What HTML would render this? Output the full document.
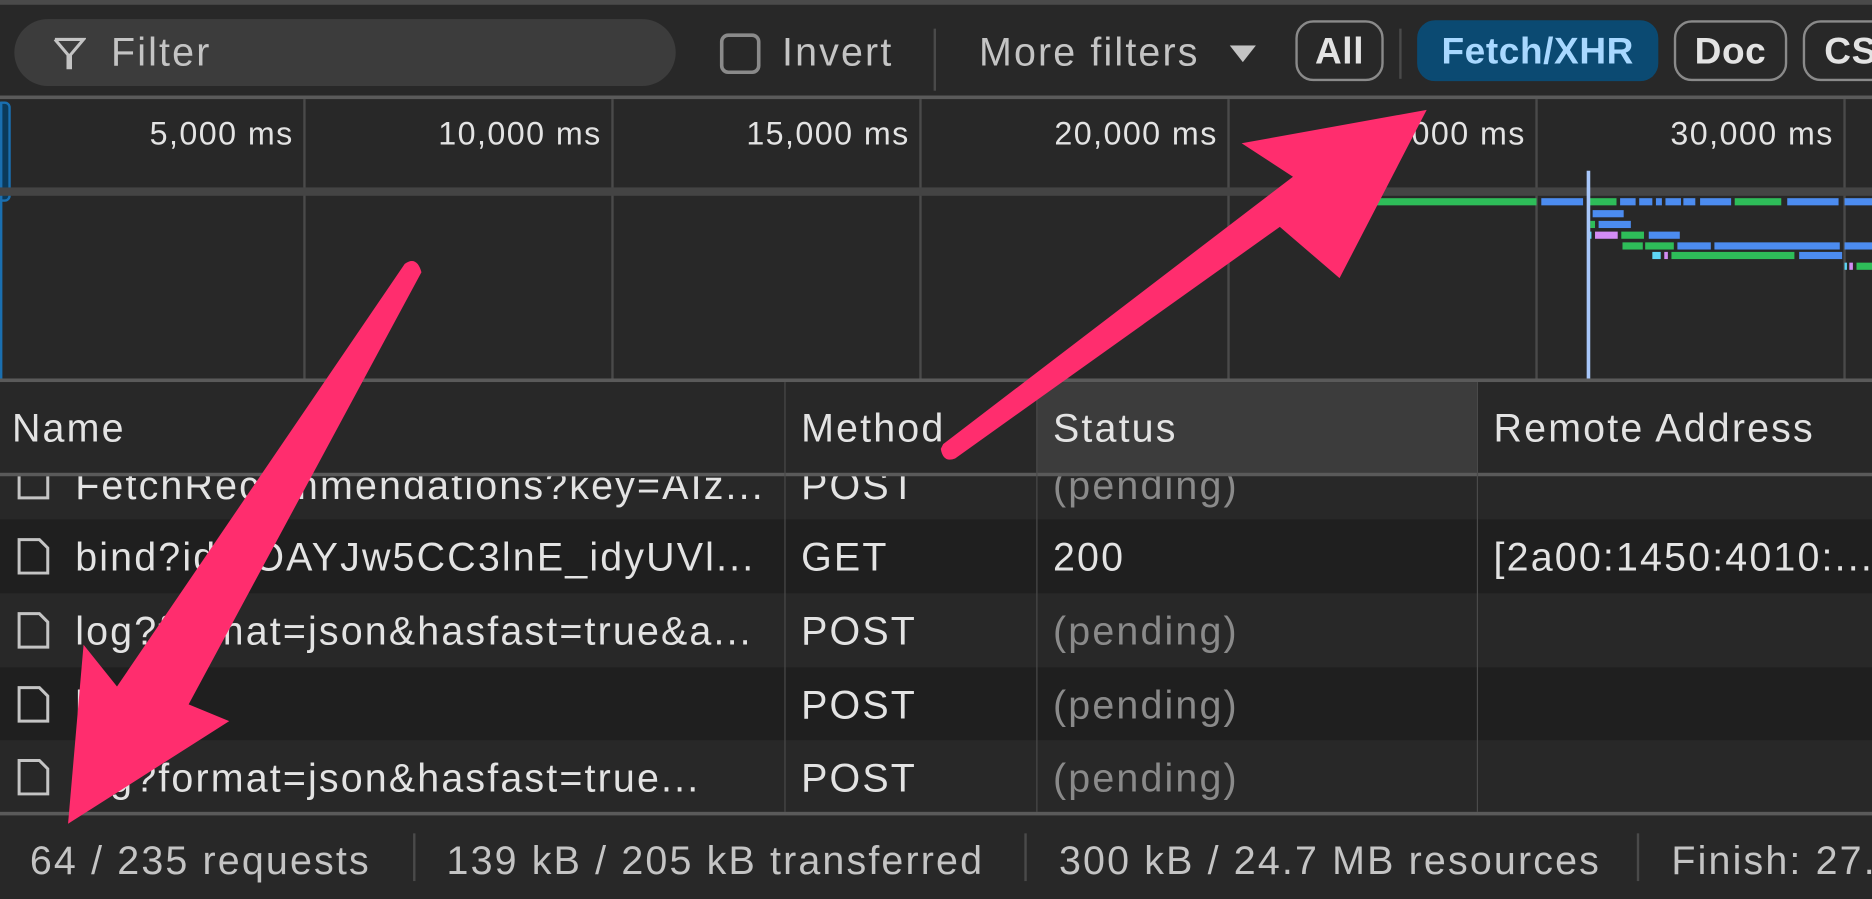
<!DOCTYPE html>
<html><head><meta charset="utf-8"><style>
html,body{margin:0;padding:0;background:#282828;width:1872px;height:899px;overflow:hidden}
#w{position:absolute;left:0;top:0;width:1568px;height:753px;transform:scale(1.19388);transform-origin:0 0;font-family:"Liberation Sans",sans-serif;color:#e3e3e3;background:#282828}
.a{position:absolute;white-space:nowrap}
.t{font-size:33px;line-height:33px;letter-spacing:1.8px}
.g{background:#4a4a4a;position:absolute;width:2px}
.btn{position:absolute;top:17px;height:51px;border:2px solid #8a8a8a;border-radius:15px;box-sizing:border-box;font-size:31px;line-height:47px;text-align:center;font-weight:bold;color:#e3e3e3;letter-spacing:0.5px}
.lbl{position:absolute;top:97px;font-size:27px;letter-spacing:1.2px;color:#e3e3e3;text-align:right;width:240px}
.row{position:absolute;left:0;width:1568px;height:62px}
.cl{position:absolute;width:1px;background:#4a4a4a}
.doc{position:absolute;left:14px;width:28px;height:32px}
.pend{color:#8a8a8a}
</style></head><body><div id="w">
<div class="a" style="left:0;top:0;width:1568px;height:4px;background:#4a4a4a"></div>
<div class="a" style="left:12px;top:16px;width:554px;height:56px;border-radius:28px;background:#3c3c3c"></div>
<svg class="a" style="left:44px;top:30px" width="28" height="30" viewBox="0 0 28 30"><path d="M2 3 H26 L15 16 V28 M2 3 L13 16 V28" fill="none" stroke="#c4c4c4" stroke-width="2.6"/></svg>
<div class="a t" style="left:93px;top:27px;color:#c4c4c4">Filter</div>
<div class="a" style="left:603px;top:28px;width:34px;height:34px;border:3px solid #8a8a8a;border-radius:7px;box-sizing:border-box"></div>
<div class="a t" style="left:655px;top:27px;color:#c4c4c4">Invert</div>
<div class="a" style="left:782px;top:24px;width:2px;height:52px;background:#4a4a4a"></div>
<div class="a t" style="left:820px;top:27px;color:#c4c4c4">More filters</div>
<svg class="a" style="left:1030px;top:38px" width="22" height="14"><path d="M0 0H22L11 14Z" fill="#c4c4c4"/></svg>
<div class="btn" style="left:1085px;width:74px">All</div>
<div class="a" style="left:1172px;top:24px;width:2px;height:42px;background:#4a4a4a"></div>
<div class="btn" style="left:1187px;width:202px;background:#0b4a72;border-color:#0b4a72;color:#a8d8ff">Fetch/XHR</div>
<div class="btn" style="left:1402px;width:95px">Doc</div>
<div class="btn" style="left:1510px;width:80px;text-align:left;padding-left:16px">CSS</div>
<div class="a" style="left:0;top:80px;width:1568px;height:3px;background:#5a5a5a"></div>
<div class="g" style="left:254px;top:83px;height:235px"></div>
<div class="g" style="left:512px;top:83px;height:235px"></div>
<div class="g" style="left:770px;top:83px;height:235px"></div>
<div class="g" style="left:1028px;top:83px;height:235px"></div>
<div class="g" style="left:1286px;top:83px;height:235px"></div>
<div class="g" style="left:1544px;top:83px;height:235px"></div>
<div class="lbl" style="left:6px">5,000 ms</div>
<div class="lbl" style="left:264px">10,000 ms</div>
<div class="lbl" style="left:522px">15,000 ms</div>
<div class="lbl" style="left:780px">20,000 ms</div>
<div class="lbl" style="left:1038px">25,000 ms</div>
<div class="lbl" style="left:1296px">30,000 ms</div>
<div class="a" style="left:-4px;top:85px;width:9px;height:80px;border:2px solid #1a6fb0;border-radius:5px;background:#0b3a5a"></div>
<div class="a" style="left:0;top:86px;width:2px;height:232px;background:#1a6fb0"></div>
<div class="a" style="left:0;top:157px;width:1568px;height:7px;background:#444"></div>
<svg class="a" style="left:0;top:150px" width="1568" height="90">
<g fill="#2ebd59"><rect x="1150" y="16" width="137" height="6"/><rect x="1330" y="16" width="24" height="6"/><rect x="1453" y="16" width="39" height="6"/><rect x="1332" y="35" width="4" height="6"/><rect x="1358" y="44" width="19" height="6"/><rect x="1359" y="53" width="17" height="6"/><rect x="1378" y="53" width="24" height="6"/><rect x="1400" y="61" width="103" height="6"/><rect x="1555" y="70" width="13" height="6"/></g>
<g fill="#4c8cf0"><rect x="1291" y="16" width="35" height="6"/><rect x="1357" y="16" width="13" height="6"/><rect x="1373" y="16" width="11" height="6"/><rect x="1387" y="16" width="5" height="6"/><rect x="1395" y="16" width="13" height="6"/><rect x="1410" y="16" width="10" height="6"/><rect x="1424" y="16" width="26" height="6"/><rect x="1497" y="16" width="43" height="6"/><rect x="1545" y="16" width="23" height="6"/><rect x="1334" y="26" width="26" height="6"/><rect x="1339" y="35" width="27" height="6"/><rect x="1381" y="44" width="26" height="6"/><rect x="1405" y="53" width="28" height="6"/><rect x="1436" y="53" width="105" height="6"/><rect x="1545" y="53" width="23" height="6"/><rect x="1507" y="61" width="36" height="6"/></g>
<g fill="#d38cf5"><rect x="1336" y="44" width="19" height="6"/><rect x="1394" y="61" width="3" height="6"/><rect x="1549" y="70" width="3" height="6"/></g>
<g fill="#5ed6f7"><rect x="1331" y="44" width="2" height="6"/><rect x="1384" y="61" width="7" height="6"/><rect x="1545" y="70" width="2" height="6"/></g>
</svg>
<div class="a" style="left:1329px;top:143px;width:3px;height:175px;background:#a8c7fa"></div>
<div class="a" style="left:0;top:317px;width:1568px;height:3px;background:#5a5a5a"></div>
<div class="a" style="left:868px;top:320px;width:369px;height:78px;background:#3c3c3c"></div>
<div class="a t" style="left:10px;top:342px">Name</div>
<div class="a t" style="left:671px;top:342px">Method</div>
<div class="a t" style="left:882px;top:342px">Status</div>
<div class="a t" style="left:1251px;top:342px">Remote Address</div>
<div class="a" style="left:0;top:396px;width:1568px;height:3px;background:#5a5a5a"></div>
<div class="row" style="top:399px;height:36px;background:#282828;overflow:hidden"><svg class="doc" style="top:-12px" viewBox="0 0 28 32"><path d="M2 2H19L26 9V30H2Z" fill="none" stroke="#c4c4c4" stroke-width="2.5"/></svg><div class="a t" style="left:63px;top:-9px">FetchRecommendations?key=AIz...</div><div class="a t" style="left:671px;top:-9px">POST</div><div class="a t pend" style="left:882px;top:-9px">(pending)</div></div>
<div class="row" style="top:435px;background:#1f1f1f"><svg class="doc" style="top:15px" viewBox="0 0 28 32"><path d="M2 2H19L26 9V30H2Z" fill="none" stroke="#c4c4c4" stroke-width="2.5"/></svg><div class="a t" style="left:63px;top:15px">bind?id=lOAYJw5CC3lnE_idyUVl...</div><div class="a t" style="left:671px;top:15px">GET</div><div class="a t" style="left:882px;top:15px">200</div><div class="a t" style="left:1251px;top:15px">[2a00:1450:4010:...</div></div>
<div class="row" style="top:497px;background:#282828"><svg class="doc" style="top:15px" viewBox="0 0 28 32"><path d="M2 2H19L26 9V30H2Z" fill="none" stroke="#c4c4c4" stroke-width="2.5"/></svg><div class="a t" style="left:63px;top:15px">log?format=json&amp;hasfast=true&amp;a...</div><div class="a t" style="left:671px;top:15px">POST</div><div class="a t pend" style="left:882px;top:15px">(pending)</div></div>
<div class="row" style="top:559px;background:#1f1f1f"><svg class="doc" style="top:15px" viewBox="0 0 28 32"><path d="M2 2H19L26 9V30H2Z" fill="none" stroke="#c4c4c4" stroke-width="2.5"/></svg><div class="a t" style="left:63px;top:15px">l</div><div class="a t" style="left:671px;top:15px">POST</div><div class="a t pend" style="left:882px;top:15px">(pending)</div></div>
<div class="row" style="top:620px;background:#282828"><svg class="doc" style="top:15px" viewBox="0 0 28 32"><path d="M2 2H19L26 9V30H2Z" fill="none" stroke="#c4c4c4" stroke-width="2.5"/></svg><div class="a t" style="left:63px;top:15px">log?format=json&amp;hasfast=true...</div><div class="a t" style="left:671px;top:15px">POST</div><div class="a t pend" style="left:882px;top:15px">(pending)</div></div>
<div class="cl" style="left:657px;top:320px;height:360px"></div>
<div class="cl" style="left:868px;top:320px;height:360px"></div>
<div class="cl" style="left:1237px;top:320px;height:360px"></div>
<div class="a" style="left:0;top:680px;width:1568px;height:3px;background:#5a5a5a"></div>
<div class="a t" style="left:25px;top:704px;color:#c4c4c4">64 / 235 requests</div>
<div class="a" style="left:346px;top:698px;width:2px;height:40px;background:#4a4a4a"></div>
<div class="a t" style="left:374px;top:704px;color:#c4c4c4">139 kB / 205 kB transferred</div>
<div class="a" style="left:858px;top:698px;width:2px;height:40px;background:#4a4a4a"></div>
<div class="a t" style="left:887px;top:704px;color:#c4c4c4">300 kB / 24.7 MB resources</div>
<div class="a" style="left:1371px;top:698px;width:2px;height:40px;background:#4a4a4a"></div>
<div class="a t" style="left:1400px;top:704px;color:#c4c4c4">Finish: 27.5 s</div>
<svg class="a" style="left:0;top:0" width="1568" height="753">
<path d="M339 221 Q349 214 353 228 L158 590 L192 604 L57 690 L70 540 L98 575 Z" fill="#ff2d6e"/>
<path d="M788 376 Q790 388 800 384 L1072 190 L1122 233 L1195 92 L1040 120 L1083 148 L790 372 Z" fill="#ff2d6e"/>
</svg>
</div></body></html>
